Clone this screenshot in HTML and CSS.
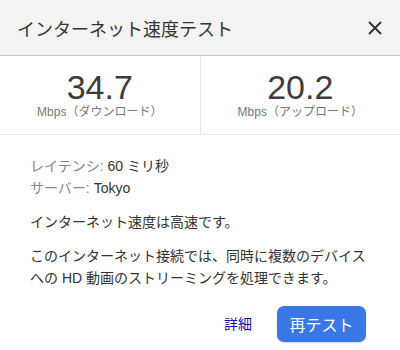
FILE: index.html
```html
<!DOCTYPE html>
<html lang="ja">
<head>
    <meta charset="UTF-8">
    <meta name="viewport" content="width=device-width, initial-scale=1.0">
    <title>インターネット速度テスト</title>
    <link rel="stylesheet" href="styles.css">
</head>
<body>
    <div class="dialog">
        <div class="header">
            <h1>インターネット速度テスト</h1>
            <button class="close" aria-label="閉じる">
                <svg width="14" height="14" viewBox="0 0 14 14">
                    <path d="M1 1 L13 13 M13 1 L1 13" stroke="#333" stroke-width="2" fill="none"/>
                </svg>
            </button>
        </div>
        <div class="stats">
            <div class="stat">
                <div class="value">34.7</div>
                <div class="unit">Mbps（ダウンロード）</div>
            </div>
            <div class="stat">
                <div class="value">20.2</div>
                <div class="unit">Mbps（アップロード）</div>
            </div>
        </div>
        <div class="content">
            <div class="details">
                <div><span class="label">レイテンシ:</span> 60 ミリ秒</div>
                <div><span class="label">サーバー:</span> Tokyo</div>
            </div>
            <p>インターネット速度は高速です。</p>
            <p>このインターネット接続では、同時に複数のデバイスへの HD 動画のストリーミングを処理できます。</p>
            <div class="actions">
                <a href="#" class="more">詳細</a>
                <button class="retest">再テスト</button>
            </div>
        </div>
    </div>
</body>
</html>
```

FILE: styles.css
```css
body {
    margin: 0;
    font-family: "Liberation Sans", Arial, "Noto Sans CJK JP", sans-serif;
    color: #333;
    background: #ffffff;
}

.dialog {
    width: 400px;
    height: 350px;
    overflow: hidden;
}

.header {
    display: flex;
    align-items: center;
    justify-content: space-between;
    height: 55px;
    padding: 0 18px 0 17px;
    background: #f3f3f3;
    border-bottom: 1px solid #cbcbcb;
}

.header h1 {
    margin: 0;
    font-size: 18px;
    font-weight: normal;
    color: #333;
}

.close {
    display: flex;
    padding: 0;
    border: none;
    background: none;
    cursor: pointer;
}

.stats {
    display: flex;
    height: 78px;
    border-bottom: 1px solid #e6e6e6;
}

.stat {
    flex: 1;
    display: flex;
    flex-direction: column;
    align-items: center;
    padding-top: 14px;
}

.stat + .stat {
    border-left: 1px solid #e6e6e6;
}

.value {
    font-size: 34px;
    line-height: 34px;
    color: #3c3c3c;
}

.unit {
    font-size: 12px;
    line-height: 16px;
    color: #777;
}

.content {
    padding: 20px 30px 0 30px;
    font-size: 14px;
    line-height: 22px;
}

.details .label {
    color: #888;
}

.content p {
    margin: 12px 0 0;
}

.actions {
    display: flex;
    justify-content: flex-end;
    align-items: center;
    margin-top: 17px;
    margin-right: 4px;
}

.more {
    color: #1a0dab;
    text-decoration: none;
    margin-right: 25px;
}

.retest {
    width: 89px;
    height: 36px;
    border: none;
    border-radius: 7px;
    background: #3a78e8;
    color: #ffffff;
    font-family: inherit;
    font-size: 16px;
    cursor: pointer;
    box-shadow: 0 1px 2px rgba(0, 0, 0, 0.15);
}
```
